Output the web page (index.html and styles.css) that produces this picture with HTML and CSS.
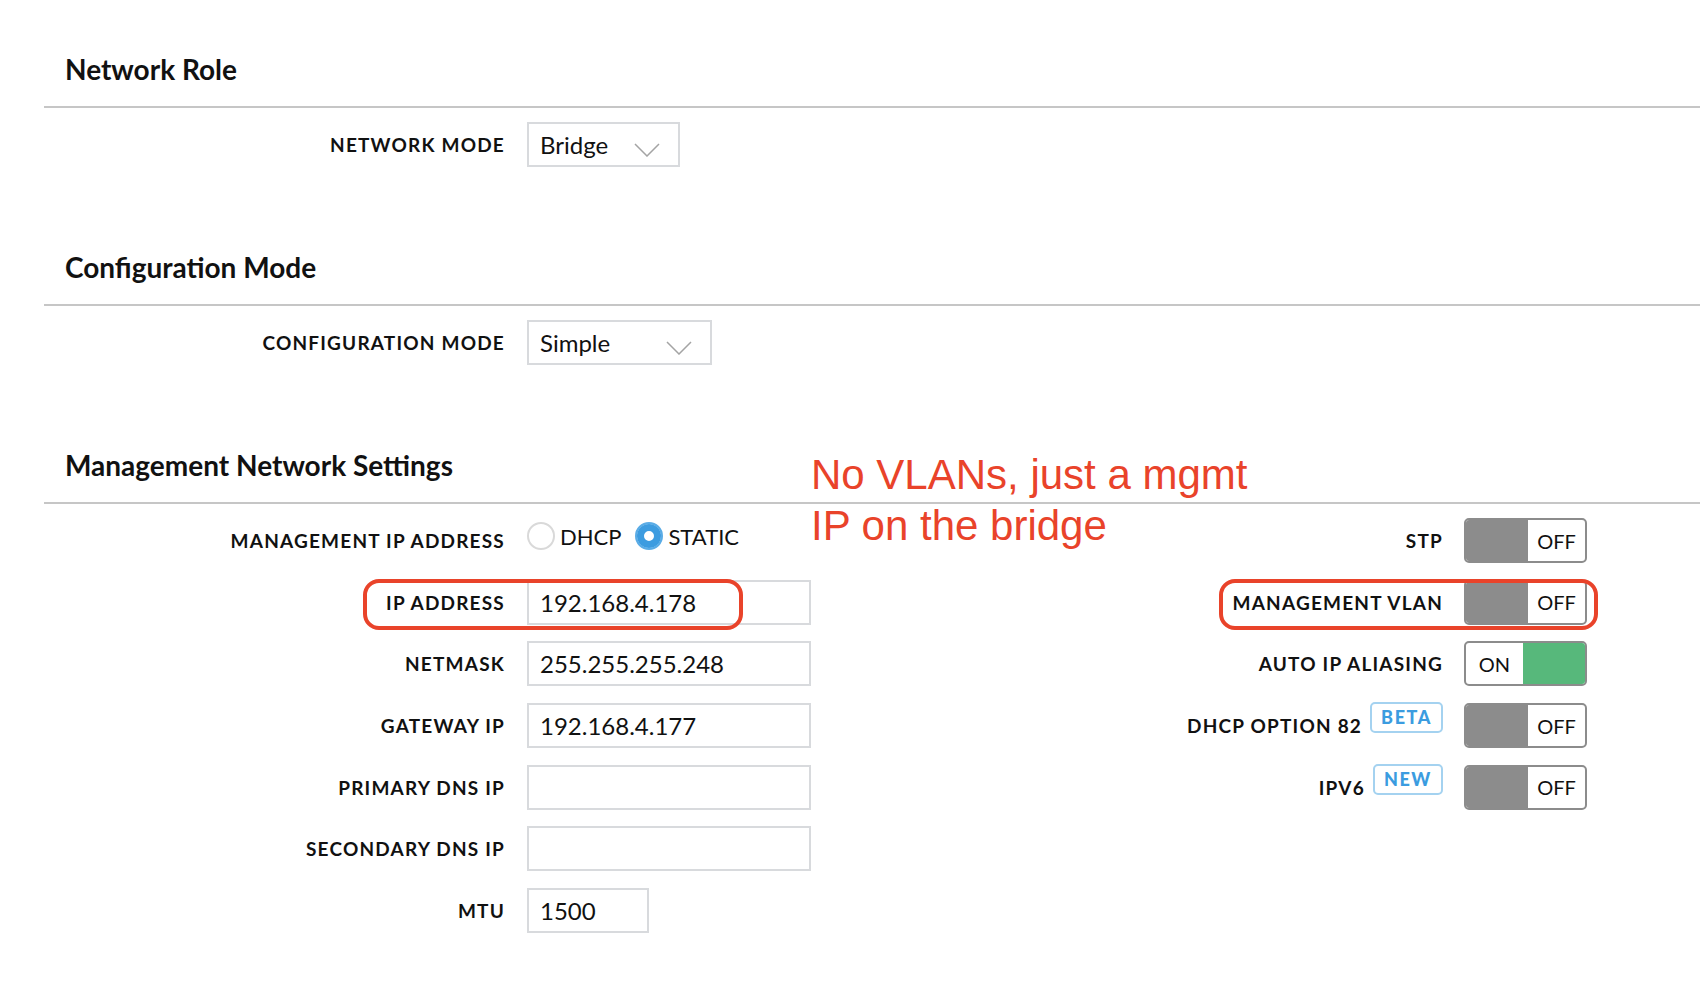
FILE: index.html
```html
<!DOCTYPE html>
<html lang="en">
<head>
    <meta charset="UTF-8">
    <title>Network settings</title>
    <link rel="stylesheet" href="styles.css">
</head>
<body>
<div class="page">
    <section class="panel">
        <h2 class="panel-title">Network Role</h2>
        <div class="panel-body">
            <div class="fields">
                <div class="field">
                    <label class="field-label">NETWORK MODE</label>
                    <div class="select select-mode">
                        <span>Bridge</span>
                        <svg class="chevron" width="26" height="14" viewBox="0 0 26 14"><polyline points="1,1 13,13 25,1" fill="none" stroke="#a4a4a4" stroke-width="1.5"/></svg>
                    </div>
                </div>
            </div>
        </div>
    </section>

    <section class="panel">
        <h2 class="panel-title">Configuration Mode</h2>
        <div class="panel-body">
            <div class="fields">
                <div class="field">
                    <label class="field-label">CONFIGURATION MODE</label>
                    <div class="select select-config">
                        <span>Simple</span>
                        <svg class="chevron" width="26" height="14" viewBox="0 0 26 14"><polyline points="1,1 13,13 25,1" fill="none" stroke="#a4a4a4" stroke-width="1.5"/></svg>
                    </div>
                </div>
            </div>
        </div>
    </section>

    <section class="panel">
        <h2 class="panel-title">Management Network Settings</h2>
        <div class="panel-body split">
            <div class="fields">
                <div class="field">
                    <label class="field-label">MANAGEMENT IP ADDRESS</label>
                    <div class="radios">
                        <span class="radio"></span><span class="radio-text">DHCP</span>
                        <span class="radio checked"></span><span class="radio-text">STATIC</span>
                    </div>
                </div>
                <div class="field">
                    <label class="field-label">IP ADDRESS</label>
                    <div class="input">192.168.4.178</div>
                </div>
                <div class="field">
                    <label class="field-label">NETMASK</label>
                    <div class="input">255.255.255.248</div>
                </div>
                <div class="field">
                    <label class="field-label">GATEWAY IP</label>
                    <div class="input">192.168.4.177</div>
                </div>
                <div class="field">
                    <label class="field-label">PRIMARY DNS IP</label>
                    <div class="input"></div>
                </div>
                <div class="field">
                    <label class="field-label">SECONDARY DNS IP</label>
                    <div class="input"></div>
                </div>
                <div class="field">
                    <label class="field-label">MTU</label>
                    <div class="input input-short">1500</div>
                </div>
            </div>

            <div class="toggles">
                <div class="field">
                    <label class="field-label">STP</label>
                    <div class="toggle off"><span class="knob"></span><span class="state">OFF</span></div>
                </div>
                <div class="field">
                    <label class="field-label">MANAGEMENT VLAN</label>
                    <div class="toggle off"><span class="knob"></span><span class="state">OFF</span></div>
                </div>
                <div class="field">
                    <label class="field-label">AUTO IP ALIASING</label>
                    <div class="toggle on"><span class="state">ON</span><span class="knob"></span></div>
                </div>
                <div class="field">
                    <label class="field-label">DHCP OPTION 82<span class="badge">BETA</span></label>
                    <div class="toggle off"><span class="knob"></span><span class="state">OFF</span></div>
                </div>
                <div class="field">
                    <label class="field-label">IPV6<span class="badge">NEW</span></label>
                    <div class="toggle off"><span class="knob"></span><span class="state">OFF</span></div>
                </div>
            </div>
        </div>
    </section>

    <!-- hand-drawn annotation over the screenshot -->
    <span class="mark mark-ip"></span>
    <span class="mark mark-vlan"></span>
    <p class="note">No VLANs, just a mgmt<br>IP on the bridge</p>
</div>
</body>
</html>
```

FILE: styles.css
```css
/* reset */
body,h2,p{margin:0;padding:0}
body{background:#fff;color:#111;font-family:Lato,"Noto Sans",sans-serif;}

.page {
    position: relative;
    padding: 51px 0 40px 44px;
}
.panel {
    margin-bottom: 82px;
}
.panel:last-of-type {
    margin-bottom: 0;
}
.panel-title {
    font-size: 28px;
    line-height: 36px;
    font-weight: 700;
    padding: 0 0 19px 21px;
}
.panel-body {
    border-top: 2px solid #c6c6c6;
    padding-top: 14px;
}
.split {
    display: flex;
    align-items: flex-start;
}

.fields,
.toggles {
    display: grid;
    row-gap: 16.7px;
    align-content: start;
}
.fields {
    grid-template-columns: 461px auto;
    column-gap: 22px;
}
.toggles {
    grid-template-columns: auto auto;
    column-gap: 21px;
    margin-left: auto;
    padding-right: 113px;
}
.field {
    display: contents;
}
.field-label {
    height: 45px;
    display: flex;
    align-items: center;
    justify-content: flex-end;
    font-size: 19px;
    font-weight: 700;
    letter-spacing: 1.2px;
    white-space: pre;
}

/* select */
.select {
    height: 45px;
    box-sizing: border-box;
    border: 2px solid #d8dadd;
    display: flex;
    align-items: center;
    justify-content: space-between;
    padding: 0 18px 0 11px;
    font-size: 24px;
}
.select-mode { width: 153px; }
.select-config { width: 185px; }
.chevron { margin-top: 10px; }

/* text inputs */
.input {
    width: 284px;
    height: 45px;
    box-sizing: border-box;
    border: 2px solid #d8dadd;
    padding: 0 11px;
    font-size: 24px;
    line-height: 41px;
}
.input-short { width: 122px; }

/* radios */
.radios {
    display: flex;
    align-items: center;
    font-size: 22px;
    margin-top: -10px;
}
.radio {
    width: 28px;
    height: 28px;
    box-sizing: border-box;
    border: 2px solid #d9d9d9;
    border-radius: 50%;
    margin-right: 5px;
}
.radio.checked {
    border: 2px solid #5aace6;
    background: #3d9ce0;
    box-shadow: inset 0 0 0 7px #3d9ce0, inset 0 0 0 14px #fff;
    margin-left: 14px;
}
.radio-text {
    margin-top: 1px;
}

/* toggles */
.toggle {
    width: 123px;
    height: 45px;
    box-sizing: border-box;
    border: 2px solid #8c8c8c;
    border-radius: 5px;
    display: flex;
    overflow: hidden;
    font-size: 20px;
}
.toggle .knob {
    width: 62px;
    background: #8c8c8c;
}
.toggle.on .knob {
    background: #57b87b;
}
.toggle .state {
    flex: 1;
    display: flex;
    align-items: center;
    justify-content: center;
}

.badge {
    align-self: flex-start;
    margin: -1px 0 0 8px;
    height: 31px;
    box-sizing: border-box;
    padding: 0 9px;
    border: 2px solid #a4d2f0;
    border-radius: 5px;
    color: #3b9ce0;
    font-size: 18px;
    font-weight: 900;
    letter-spacing: 1.6px;
    line-height: 27px;
}

/* annotation */
.mark {
    position: absolute;
    box-sizing: border-box;
    border: 4px solid #e9432a;
    border-radius: 16px;
    height: 51px;
    top: 579px;
}
.mark-ip {
    left: 363px;
    width: 380px;
}
.mark-vlan {
    left: 1219px;
    width: 379px;
}
.note {
    position: absolute;
    left: 811px;
    top: 449px;
    font-family: "Liberation Sans", Arial, sans-serif;
    font-size: 42px;
    line-height: 51px;
    color: #e9432a;
}
```
